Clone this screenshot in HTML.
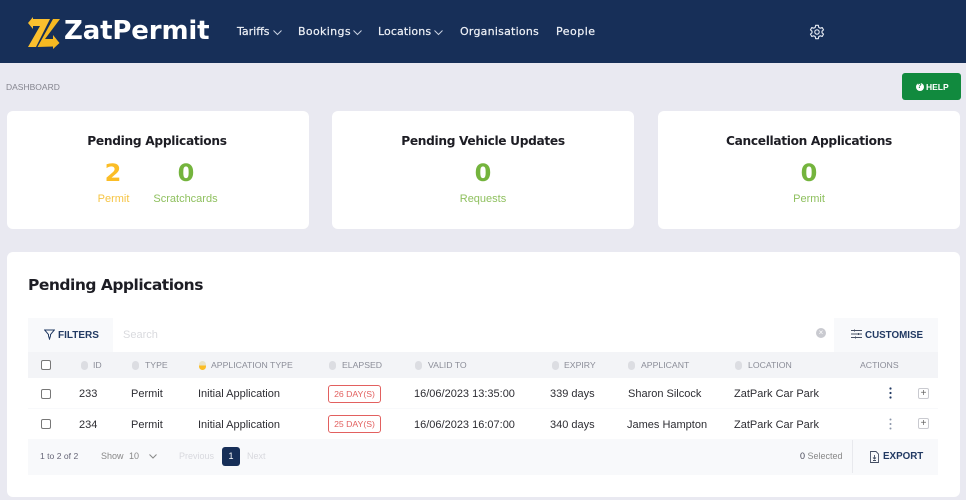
<!DOCTYPE html>
<html><head><meta charset="utf-8"><style>
*{box-sizing:border-box}
html,body{margin:0;padding:0;width:966px;height:500px;overflow:hidden;background:#e9e9f1;font-family:"Liberation Sans",sans-serif}
.a{position:absolute;white-space:nowrap}
.card{position:absolute;background:#fff;border-radius:6px}
.h{font-family:"DejaVu Sans",sans-serif;font-weight:700;color:#1d1d24}
.nav{font-family:"DejaVu Sans",sans-serif;font-size:11px;color:#eef1f7;top:25px;line-height:14px;font-weight:400;-webkit-text-stroke:.2px #eef1f7;letter-spacing:.2px}
.num{font-family:"DejaVu Sans",sans-serif;font-weight:700;font-size:24px;line-height:28px;text-align:center}
.lab{font-size:11px;line-height:14px;text-align:center}
.th{font-size:8.700px;color:#8b8d98;top:360px;line-height:11px}
.td{font-size:11px;color:#2d2d33;line-height:14px}
.sort{position:absolute;width:7px;height:9px;top:360.500px;background:#dcdde2;border-radius:3.500px}
.cb{position:absolute;width:10px;height:10px;border:1.200px solid #777;border-radius:2px;background:#fff}
.badge{position:absolute;left:328px;width:53px;height:18px;border:1px solid #e2605f;border-radius:3px;color:#e2605f;font-size:8.700px;line-height:16px;text-align:center;background:#fff}
.plus{position:absolute;left:918px;width:11px;height:11px;border:1px solid #c9cad0;border-radius:2px;color:#666;font-size:10px;line-height:9px;text-align:center}
</style></head><body>
<div class="a" style="left:0;top:0;width:966px;height:63px;background:#172f58"></div>

<svg class="a" style="left:0;top:0" width="64" height="56" viewBox="0 0 64 56">
<path d="M28 23 L33 17 L33 19 L50 19 L36 47 L28 47 L40 26 L33 26 L33 29 Z" fill="#fcc02e"/>
<path d="M53 19 L60 19 L45 39 L53 39 L53 35 L59.500 43 L53 49 L53 46.500 L37.500 47 Z" fill="#f6b921"/>
</svg>
<div class="a" style="left:64px;top:15px;font-family:'DejaVu Sans',sans-serif;font-weight:700;font-size:26px;line-height:32px;color:#fff;letter-spacing:-.15px">ZatPermit</div>

<div class="a nav" style="left:237px;letter-spacing:0">Tariffs</div>
<svg class="a" style="left:273px;top:30px" width="9" height="6"><path d="M.5 .5 L4.500 4.500 L8.500 .5" fill="none" stroke="#c9d1e0" stroke-width="1"/></svg>
<div class="a nav" style="left:298px;letter-spacing:.35px">Bookings</div>
<svg class="a" style="left:353px;top:30px" width="9" height="6"><path d="M.5 .5 L4.500 4.500 L8.500 .5" fill="none" stroke="#c9d1e0" stroke-width="1"/></svg>
<div class="a nav" style="left:378px;letter-spacing:.1px">Locations</div>
<svg class="a" style="left:434px;top:30px" width="9" height="6"><path d="M.5 .5 L4.500 4.500 L8.500 .5" fill="none" stroke="#c9d1e0" stroke-width="1"/></svg>
<div class="a nav" style="left:460px;letter-spacing:.23px">Organisations</div>
<div class="a nav" style="left:556px;letter-spacing:.5px">People</div>

<svg class="a" style="left:809px;top:24px" width="16" height="16" viewBox="0 0 24 24" fill="none" stroke="#e6eaf2" stroke-width="1.700" stroke-linejoin="round">
<path d="M10 2h4l.6 3 2.300 1.300 2.900-1 2 3.500-2.300 2v2.400l2.300 2-2 3.500-2.900-1L14.600 19 14 22h-4l-.6-3-2.300-1.300-2.900 1-2-3.500 2.300-2v-2.400l-2.300-2 2-3.500 2.900 1L9.400 5z"/>
<circle cx="12" cy="12" r="3.300"/></svg>

<div class="a" style="left:6px;top:82px;font-size:8.500px;line-height:10px;color:#85858f">DASHBOARD</div>

<div class="a" style="left:902px;top:73px;width:59px;height:27px;background:#118a3e;border-radius:3px"></div>
<div class="a" style="left:915.500px;top:83px;width:8px;height:8px;border-radius:50%;background:#fff;color:#118a3e;font-size:7px;font-weight:700;line-height:8px;text-align:center">?</div>
<div class="a" style="left:926px;top:82px;font-size:8.500px;font-weight:700;line-height:10px;color:#fff">HELP</div>

<div class="card" style="left:7px;top:111px;width:302px;height:118px"></div>
<div class="card" style="left:332px;top:111px;width:302px;height:118px"></div>
<div class="card" style="left:658px;top:111px;width:302px;height:118px"></div>

<div class="a h" style="left:6px;width:302px;text-align:center;top:134px;font-size:12.200px;line-height:15px;letter-spacing:-.3px">Pending Applications</div>
<div class="a h" style="left:332px;width:302px;text-align:center;top:134px;font-size:12.200px;line-height:15px;letter-spacing:-.33px">Pending Vehicle Updates</div>
<div class="a h" style="left:658px;width:302px;text-align:center;top:134px;font-size:12.200px;line-height:15px;letter-spacing:-.33px">Cancellation Applications</div>

<div class="a num" style="left:93px;width:40px;top:159px;color:#fbbd26">2</div>
<div class="a num" style="left:166px;width:40px;top:159px;color:#74b43d">0</div>
<div class="a num" style="left:463px;width:40px;top:159px;color:#74b43d">0</div>
<div class="a num" style="left:789px;width:40px;top:159px;color:#74b43d">0</div>
<div class="a lab" style="left:83.500px;width:60px;top:192px;color:#f6c443">Permit</div>
<div class="a lab" style="left:145.500px;width:80px;top:192px;color:#8fc05f">Scratchcards</div>
<div class="a lab" style="left:443px;width:80px;top:192px;color:#8fc05f">Requests</div>
<div class="a lab" style="left:769px;width:80px;top:192px;color:#8fc05f">Permit</div>

<div class="card" style="left:7px;top:252px;width:953px;height:245px"></div>
<div class="a h" style="left:28px;top:276px;font-size:15.500px;line-height:19px;letter-spacing:-.5px">Pending Applications</div>

<div class="a" style="left:28px;top:318px;width:910px;height:157px;background:#f8f9fb"></div>
<div class="a" style="left:113px;top:318px;width:721px;height:34px;background:#fff"></div>
<div class="a" style="left:28px;top:352px;width:910px;height:26px;background:#f3f4f7"></div>
<div class="a" style="left:28px;top:378px;width:910px;height:30px;background:#fff"></div>
<div class="a" style="left:28px;top:409px;width:910px;height:30px;background:#fff"></div>

<svg class="a" style="left:44px;top:329px" width="11" height="11" viewBox="0 0 11 11"><path d="M.7 1 H10.300 L6.500 5.500 V7 L5.500 10 L4.500 7 V5.500 Z" fill="none" stroke="#223a63" stroke-width="1"/></svg>
<div class="a" style="left:58px;top:329px;font-size:10px;font-weight:700;line-height:13px;color:#223a63">FILTERS</div>
<div class="a" style="left:123px;top:329px;font-size:11px;line-height:13px;color:#d9dade">Search</div>
<div class="a" style="left:816px;top:328px;width:10px;height:10px;border-radius:50%;background:#c9cad0;color:#fff;font-size:8px;line-height:10px;text-align:center">×</div>
<svg class="a" style="left:851px;top:329px" width="11" height="10" viewBox="0 0 11 10"><path d="M0 1.500H11M0 5H11M0 8.500H11" stroke="#444e63" stroke-width=".9"/><path d="M3.500 .5V2.500M7.500 4V6M4.500 7.500V9.500" stroke="#444e63" stroke-width="1"/></svg>
<div class="a" style="left:865px;top:329px;font-size:9.800px;font-weight:700;line-height:13px;color:#223a63">CUSTOMISE</div>

<div class="cb" style="left:41px;top:360px"></div>
<div class="sort" style="left:81px"></div><div class="a th" style="left:93px">ID</div>
<div class="sort" style="left:132px"></div><div class="a th" style="left:145px">TYPE</div>
<div class="sort" style="left:199px;background:linear-gradient(#e9e3c8 50%,#fbbd26 50%)"></div><div class="a th" style="left:211px">APPLICATION TYPE</div>
<div class="sort" style="left:329px"></div><div class="a th" style="left:342px">ELAPSED</div>
<div class="sort" style="left:415px"></div><div class="a th" style="left:428px">VALID TO</div>
<div class="sort" style="left:552px"></div><div class="a th" style="left:564px">EXPIRY</div>
<div class="sort" style="left:628px"></div><div class="a th" style="left:641px">APPLICANT</div>
<div class="sort" style="left:735px"></div><div class="a th" style="left:748px">LOCATION</div>
<div class="a th" style="left:860px">ACTIONS</div>

<div class="cb" style="left:41px;top:389px"></div>
<div class="a td" style="left:79px;top:387px">233</div>
<div class="a td" style="left:131px;top:387px">Permit</div>
<div class="a td" style="left:198px;top:387px">Initial Application</div>
<div class="badge" style="top:385px">26 DAY(S)</div>
<div class="a td" style="left:414px;top:387px">16/06/2023 13:35:00</div>
<div class="a td" style="left:550px;top:387px">339 days</div>
<div class="a td" style="left:628px;top:387px">Sharon Silcock</div>
<div class="a td" style="left:734px;top:387px">ZatPark Car Park</div>
<svg class="a" style="left:888px;top:387px" width="5" height="12"><circle cx="2.500" cy="1.500" r="1.100" fill="#223a63"/><circle cx="2.500" cy="6" r="1.100" fill="#223a63"/><circle cx="2.500" cy="10.500" r="1.100" fill="#223a63"/></svg>
<div class="plus" style="top:388px">+</div>

<div class="cb" style="left:41px;top:419px"></div>
<div class="a td" style="left:79px;top:418px">234</div>
<div class="a td" style="left:131px;top:418px">Permit</div>
<div class="a td" style="left:198px;top:418px">Initial Application</div>
<div class="badge" style="top:415px">25 DAY(S)</div>
<div class="a td" style="left:414px;top:418px">16/06/2023 16:07:00</div>
<div class="a td" style="left:550px;top:418px">340 days</div>
<div class="a td" style="left:627px;top:418px">James Hampton</div>
<div class="a td" style="left:734px;top:418px">ZatPark Car Park</div>
<svg class="a" style="left:888px;top:418px" width="5" height="12"><circle cx="2.500" cy="1.500" r="1" fill="#8a94a8"/><circle cx="2.500" cy="6" r="1" fill="#8a94a8"/><circle cx="2.500" cy="10.500" r="1" fill="#8a94a8"/></svg>
<div class="plus" style="top:418px">+</div>

<div class="a" style="left:40px;top:451px;font-size:8.600px;line-height:11px;color:#667">1 to 2 of 2</div>
<div class="a" style="left:101px;top:451px;font-size:9px;line-height:11px;color:#888">Show</div>
<div class="a" style="left:129px;top:451px;font-size:9px;line-height:11px;color:#888">10</div>
<svg class="a" style="left:149px;top:454px" width="8" height="5"><path d="M.5 .5L4 4L7.500 .5" fill="none" stroke="#888" stroke-width="1"/></svg>
<div class="a" style="left:179px;top:451px;font-size:9px;line-height:11px;color:#d8d9de">Previous</div>
<div class="a" style="left:222px;top:447px;width:18px;height:19px;background:#172f58;border-radius:3px;color:#fff;font-size:9px;line-height:19px;text-align:center">1</div>
<div class="a" style="left:247px;top:451px;font-size:9px;line-height:11px;color:#d8d9de">Next</div>
<div class="a" style="left:800px;top:451px;font-size:9px;line-height:11px;color:#888"><span style="color:#445">0</span> Selected</div>
<div class="a" style="left:852px;top:440px;width:1px;height:33px;background:#e8e9ed"></div>
<svg class="a" style="left:870px;top:451px" width="9" height="12" viewBox="0 0 9 12"><path d="M.5 .5H6L8.500 3V11.500H.5Z M4.500 4V8 M3 6.500L4.500 8L6 6.500 M3 9.500H6" fill="none" stroke="#444e63" stroke-width=".9"/></svg>
<div class="a" style="left:883px;top:451px;font-size:9.800px;font-weight:700;line-height:12px;color:#223a63">EXPORT</div>
</body></html>
